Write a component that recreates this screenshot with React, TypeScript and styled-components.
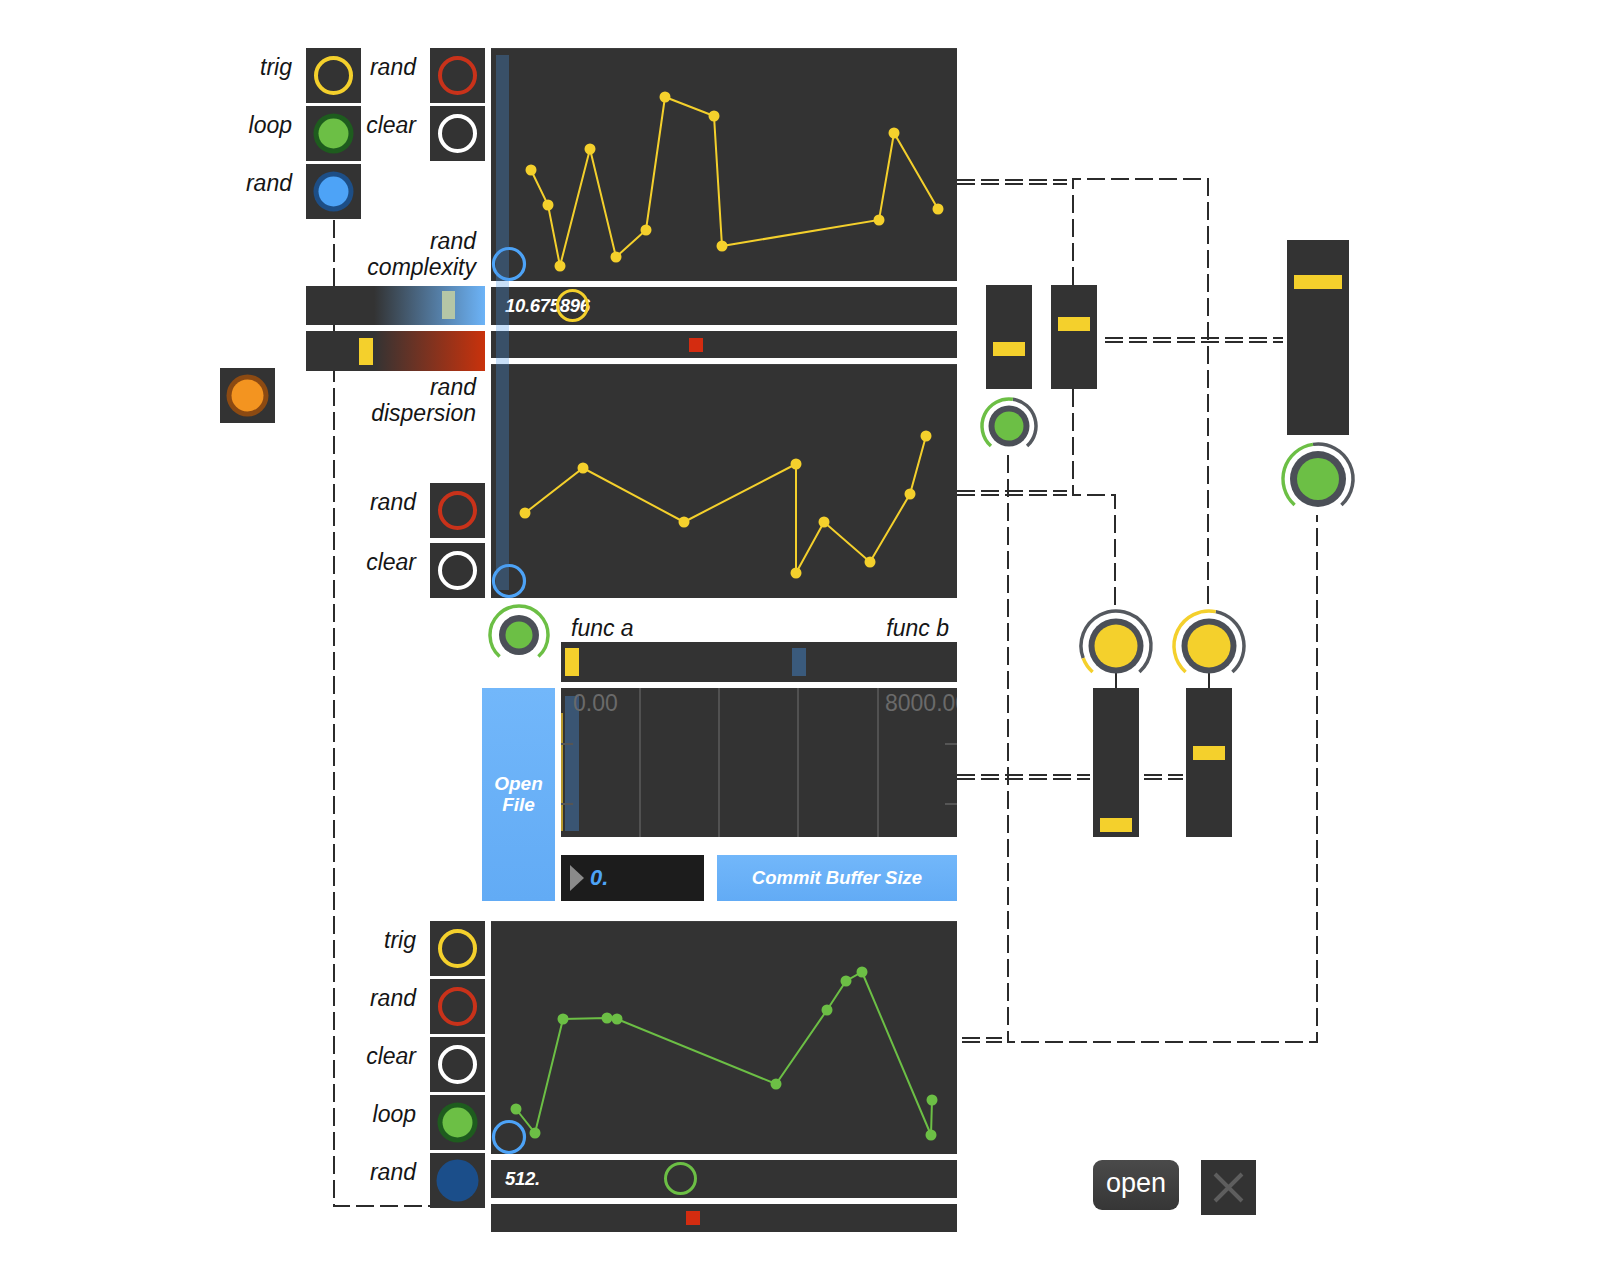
import React from 'react';
import styled, { createGlobalStyle, css } from 'styled-components';

const GlobalStyle = createGlobalStyle`
  html, body { margin: 0; padding: 0; background: #ffffff; }
  body { font-family: "Liberation Sans", Arial, sans-serif; }
`;

type Pos = { $x: number; $y: number };

/* patch objects sit on a free canvas: their place is the content */
const at = css<Pos>`
  position: absolute;
  left: ${(p) => p.$x}px;
  top: ${(p) => p.$y}px;
`;

const Canvas = styled.div`
  position: relative;
  width: 1600px;
  height: 1280px;
  overflow: hidden;
  background: #ffffff;
`;

const CordLayer = styled.svg`
  position: absolute;
  left: 0;
  top: 0;
  width: 1600px;
  height: 1280px;
  pointer-events: none;
`;

/* ---------- clusters (patch groups) ---------- */
const ClusterRow = styled.div<Pos & { $gap: number }>`
  ${at};
  display: flex;
  align-items: flex-start;
  gap: ${(p) => p.$gap}px;
`;

const ClusterColumn = styled.div<Pos & { $gap: number }>`
  ${at};
  display: flex;
  flex-direction: column;
  align-items: center;
  gap: ${(p) => p.$gap}px;
`;

const StrandColumn = styled.div<{ $gap: number }>`
  display: flex;
  flex-direction: column;
  align-items: center;
  gap: ${(p) => p.$gap}px;
`;

const EditorColumn = styled.div`
  display: flex;
  flex-direction: column;
  gap: 6px;
`;

/* ---------- toggles ---------- */
const ToggleStack = styled.div<{ $w: number; $gap: number }>`
  width: ${(p) => p.$w}px;
  flex: none;
  display: flex;
  flex-direction: column;
  gap: ${(p) => p.$gap}px;
`;

const PlacedStack = styled(ToggleStack)<Pos>`
  ${at};
`;

const ToggleRow = styled.div`
  display: flex;
  justify-content: flex-end;
  align-items: flex-start;
  gap: 14px;
`;

const Label = styled.span`
  font: italic 23px/28px "Liberation Sans", Arial, sans-serif;
  color: #151515;
  padding-top: 5px;
  white-space: nowrap;
`;

const ToggleBox = styled.div`
  width: 55px;
  height: 55px;
  flex: none;
  background: #333333;
  display: grid;
  place-items: center;
`;

const FloatingToggle = styled(ToggleBox)<Pos>`
  ${at};
`;

const Comment = styled.div<Pos & { $w: number }>`
  ${at};
  width: ${(p) => p.$w}px;
  text-align: right;
  font: italic 23px/26px "Liberation Sans", Arial, sans-serif;
  color: #151515;
`;

type ToggleKind =
  | { kind: 'ring'; color: string }
  | { kind: 'dot'; fill: string; ring: string }
  | { kind: 'solid'; fill: string };

const ToggleIcon: React.FC<{ t: ToggleKind }> = ({ t }) => (
  <svg width="55" height="55" viewBox="0 0 55 55">
    {t.kind === 'ring' && <circle cx="27.5" cy="27.5" r="17.5" fill="none" stroke={t.color} strokeWidth="4" />}
    {t.kind === 'dot' && (
      <>
        <circle cx="27.5" cy="27.5" r="20" fill={t.ring} />
        <circle cx="27.5" cy="27.5" r="15" fill={t.fill} />
      </>
    )}
    {t.kind === 'solid' && <circle cx="27.5" cy="27.5" r="21" fill={t.fill} />}
  </svg>
);

const YELLOW = '#f4d02c';
const RED = '#c9321a';
const WHITE = '#ffffff';
const GREEN = '#6cbf45';
const BLUE = '#4da3f7';

type Item = [string, ToggleKind];

const ToggleRows: React.FC<{ items: Item[] }> = ({ items }) => (
  <>
    {items.map(([label, t], i) => (
      <ToggleRow key={i}>
        <Label>{label}</Label>
        <ToggleBox>
          <ToggleIcon t={t} />
        </ToggleBox>
      </ToggleRow>
    ))}
  </>
);

/* ---------- function editors ---------- */
const FunctionPanel = styled.div<{ $h: number }>`
  width: 466px;
  height: ${(p) => p.$h}px;
  background: #333333;
  border-top: 1px solid #3e3e3e;
  box-sizing: border-box;
  flex: none;
`;

const FunctionGraph: React.FC<{ pts: number[][]; color: string; h: number }> = ({ pts, color, h }) => (
  <svg width="466" height={h} viewBox={`0 0 466 ${h}`} style={{ display: 'block' }}>
    <polyline points={pts.map((p) => p.join(',')).join(' ')} fill="none" stroke={color} strokeWidth="2" />
    {pts.map((p, i) => (
      <circle key={i} cx={p[0]} cy={p[1]} r="5.5" fill={color} />
    ))}
    <circle cx="18" cy={h - 18} r="15.5" fill="none" stroke={BLUE} strokeWidth="3.2" />
  </svg>
);

const ValueBar = styled.div`
  position: relative;
  width: 466px;
  height: 38px;
  flex: none;
  background: #333333;
  display: flex;
  align-items: center;
  padding-left: 14px;
  box-sizing: border-box;
  font: italic bold 18.5px "Liberation Sans", Arial, sans-serif;
  color: #ffffff;
  letter-spacing: -0.3px;
`;

const BarRing = styled.div<{ $left: number; $color: string }>`
  position: absolute;
  left: ${(p) => p.$left - 17}px;
  top: 2px;
  width: 27px;
  height: 27px;
  border: 3.5px solid ${(p) => p.$color};
  border-radius: 50%;
`;

const MarkerBar = styled.div<{ $h: number }>`
  position: relative;
  width: 466px;
  height: ${(p) => p.$h}px;
  flex: none;
  background: #333333;
`;

const RedMark = styled.div<{ $left: number }>`
  position: absolute;
  left: ${(p) => p.$left}px;
  top: 7px;
  width: 14px;
  height: 14px;
  background: #d42c10;
`;

const GradientSlider = styled.div<{ $h: number; $tone: string }>`
  position: relative;
  width: 179px;
  height: ${(p) => p.$h}px;
  background: linear-gradient(to right, #333333 38%, ${(p) => p.$tone} 100%);
`;

const GradThumb = styled.div<{ $left: number; $top: number; $color: string; $w: number; $h: number }>`
  position: absolute;
  left: ${(p) => p.$left}px;
  top: ${(p) => p.$top}px;
  width: ${(p) => p.$w}px;
  height: ${(p) => p.$h}px;
  background: ${(p) => p.$color};
`;

const Playhead = styled.div<Pos>`
  ${at};
  width: 13px;
  height: 535px;
  background: rgba(74, 150, 230, 0.3);
`;

/* ---------- buffer section (grid) ---------- */
const BufferSection = styled.div<Pos>`
  ${at};
  display: grid;
  grid-template-columns: 73px 396px;
  grid-template-rows: 36px 40px 6px 149px 18px 46px;
  column-gap: 6px;
`;

const DialCell = styled.div`
  grid-column: 1;
  grid-row: 1 / 3;
  display: flex;
  justify-content: center;
  align-items: flex-start;
  margin-top: -3px;
`;

const FuncLabels = styled.div`
  grid-column: 2;
  grid-row: 1;
  align-self: end;
  display: flex;
  justify-content: space-between;
  padding: 0 8px 0 10px;
  font: italic 23px/28px "Liberation Sans", Arial, sans-serif;
  color: #151515;
`;

const FuncSlider = styled.div`
  grid-column: 2;
  grid-row: 2;
  position: relative;
  background: #333333;
`;

const SliderKnob = styled.div<{ $left: number; $color: string }>`
  position: absolute;
  left: ${(p) => p.$left}px;
  top: 6px;
  width: 14px;
  height: 28px;
  background: ${(p) => p.$color};
`;

const OpenFile = styled.div`
  grid-column: 1;
  grid-row: 4 / 7;
  background: linear-gradient(#72b7fa, #62abf5);
  display: flex;
  align-items: center;
  justify-content: center;
  text-align: center;
  font: italic bold 19px/21px "Liberation Sans", Arial, sans-serif;
  color: #ffffff;
  padding-bottom: 2px;
`;

const Waveform = styled.div`
  grid-column: 2;
  grid-row: 4;
  position: relative;
  background: #333333;
  overflow: hidden;
`;

const GridLine = styled.div<{ $left: number }>`
  position: absolute;
  left: ${(p) => p.$left}px;
  top: 0;
  bottom: 0;
  width: 2px;
  background: #515151;
`;

const Tick = styled.div<{ $side: 'left' | 'right'; $top: number }>`
  position: absolute;
  ${(p) => p.$side}: 0;
  top: ${(p) => p.$top}px;
  width: 12px;
  height: 2px;
  background: #555555;
`;

const WaveText = styled.span<{ $left: number }>`
  position: absolute;
  left: ${(p) => p.$left}px;
  top: 2px;
  font: 23px/26px "Liberation Sans", Arial, sans-serif;
  color: #6a6a6a;
  white-space: nowrap;
`;

const Selection = styled.div`
  position: absolute;
  left: 4px;
  top: 8px;
  width: 14px;
  height: 135px;
  background: #3a5573;
`;

const CursorLine = styled.div`
  position: absolute;
  left: 0;
  top: 25px;
  width: 2px;
  height: 118px;
  background: #b89a2c;
`;

const BottomRow = styled.div`
  grid-column: 2;
  grid-row: 6;
  display: flex;
  gap: 13px;
`;

const NumberBox = styled.div`
  width: 143px;
  flex: none;
  background: #1c1c1c;
  display: flex;
  align-items: center;
  gap: 6px;
  padding-left: 9px;
  box-sizing: border-box;
  font: italic bold 22px "Liberation Sans", Arial, sans-serif;
  color: ${BLUE};
`;

const Arrow = styled.span`
  width: 0;
  height: 0;
  border-top: 13px solid transparent;
  border-bottom: 13px solid transparent;
  border-left: 14px solid #8a8a8a;
`;

const CommitButton = styled.div`
  flex: 1;
  background: linear-gradient(#72b7fa, #62abf5);
  display: flex;
  align-items: center;
  justify-content: center;
  font: italic bold 18.5px "Liberation Sans", Arial, sans-serif;
  color: #ffffff;
`;

/* ---------- right side ---------- */
const VSlider = styled.div<{ $w: number; $h: number }>`
  position: relative;
  flex: none;
  width: ${(p) => p.$w}px;
  height: ${(p) => p.$h}px;
  background: #333333;
`;

const PlacedSlider = styled(VSlider)<Pos>`
  ${at};
`;

const VThumb = styled.div<{ $top: number }>`
  position: absolute;
  left: 7px;
  right: 7px;
  top: ${(p) => p.$top}px;
  height: 14px;
  background: ${YELLOW};
`;

const DialSvg = styled.svg`
  display: block;
  flex: none;
  overflow: visible;
`;

const pt = (c: number, r: number, deg: number): [number, number] => {
  const a = (deg * Math.PI) / 180;
  return [c + r * Math.sin(a), c - r * Math.cos(a)];
};
const arcPath = (c: number, r: number, a0: number, a1: number) => {
  const [x0, y0] = pt(c, r, a0);
  const [x1, y1] = pt(c, r, a1);
  const large = a1 - a0 > 180 ? 1 : 0;
  return `M${x0.toFixed(2)} ${y0.toFixed(2)} A${r} ${r} 0 ${large} 1 ${x1.toFixed(2)} ${y1.toFixed(2)}`;
};

type DialProps = { arcR: number; ringR: number; fillR: number; color: string; value: number };
const Dial: React.FC<DialProps> = ({ arcR, ringR, fillR, color, value }) => {
  const c = arcR + 3;
  const s = c * 2;
  const split = -138 + 276 * value;
  return (
    <DialSvg width={s} height={s} viewBox={`0 0 ${s} ${s}`}>
      {value < 1 && <path d={arcPath(c, arcR, split, 138)} fill="none" stroke="#55595f" strokeWidth="3.5" />}
      {value > 0 && <path d={arcPath(c, arcR, -138, split)} fill="none" stroke={color} strokeWidth="3.5" />}
      <circle cx={c} cy={c} r={ringR} fill="#4b4f57" />
      <circle cx={c} cy={c} r={fillR} fill={color} />
    </DialSvg>
  );
};

const OpenButton = styled.div`
  width: 86px;
  height: 50px;
  border-radius: 9px;
  background: linear-gradient(#4a4a4a, #363636);
  color: #ffffff;
  display: flex;
  align-items: center;
  justify-content: center;
  font: 27px "Liberation Sans", Arial, sans-serif;
  padding-bottom: 3px;
  box-sizing: border-box;
`;

const CloseButton = styled.div`
  width: 55px;
  height: 55px;
  background: #333333;
  display: grid;
  place-items: center;
`;

/* ---------- cords ---------- */
const singleCords =
  'M334 220 V1206 H430 M1073 285 V179 H1208 V612 M1073 389 V495 H1115 V612 M1008 455 V1042 H1317 V515 M1116 672 V688 M1209 672 V688';
const doubleCords: [number, number, number][] = [
  [957, 1067, 182],
  [957, 1067, 493],
  [1105, 1283, 340],
  [957, 1090, 777],
  [1144, 1183, 777],
  [962, 1002, 1040],
];

const Cords: React.FC = () => (
  <CordLayer viewBox="0 0 1600 1280">
    <path d={singleCords} fill="none" stroke="#2b2b2b" strokeWidth="2" strokeDasharray="18 6" />
    {doubleCords.map(([x0, x1, y], i) => (
      <g key={i} stroke="#2b2b2b" strokeWidth="1.8" strokeDasharray="18 6">
        <line x1={x0} y1={y - 2} x2={x1} y2={y - 2} />
        <line x1={x0} y1={y + 2} x2={x1} y2={y + 2} />
      </g>
    ))}
  </CordLayer>
);

const P1 = [
  [40, 121], [57, 156], [69, 217], [99, 100], [125, 208], [155, 181], [174, 48], [223, 67], [231, 197], [388, 171], [403, 84], [447, 160],
];
const P2 = [[34, 148], [92, 103], [193, 157], [305, 99], [305, 208], [333, 157], [379, 197], [419, 129], [435, 71]];
const P3 = [
  [25, 187], [44, 211], [72, 97], [116, 96], [126, 97], [285, 162], [336, 88], [355, 59], [371, 50], [440, 213], [441, 178],
];

const YELLOW_DIALS = [
  { value: 0.1, thumb: 130 },
  { value: 0.54, thumb: 58 },
];

export default function App() {
  return (
    <>
      <GlobalStyle />
      <Canvas>
        <Cords />

        {/* top toggle block */}
        <ClusterRow $x={200} $y={48} $gap={0}>
          <ToggleStack $w={161} $gap={3}>
            <ToggleRows
              items={[
                ['trig', { kind: 'ring', color: YELLOW }],
                ['loop', { kind: 'dot', fill: GREEN, ring: '#1e5c1e' }],
                ['rand', { kind: 'dot', fill: BLUE, ring: '#1d4e86' }],
              ]}
            />
          </ToggleStack>
          <ToggleStack $w={124} $gap={3}>
            <ToggleRows
              items={[
                ['rand', { kind: 'ring', color: RED }],
                ['clear', { kind: 'ring', color: WHITE }],
              ]}
            />
          </ToggleStack>
        </ClusterRow>

        <Comment $x={316} $y={228} $w={160}>
          rand
          <br />
          complexity
        </Comment>

        <ClusterColumn $x={306} $y={286} $gap={6}>
          <GradientSlider $h={39} $tone="#6cb3f7">
            <GradThumb $left={136} $top={5} $w={13} $h={28} $color="#b5c6a6" />
          </GradientSlider>
          <GradientSlider $h={40} $tone="#c9320c">
            <GradThumb $left={53} $top={7} $w={14} $h={27} $color={YELLOW} />
          </GradientSlider>
        </ClusterColumn>

        {/* upper editors */}
        <ClusterColumn $x={491} $y={48} $gap={6}>
          <FunctionPanel $h={233}>
            <FunctionGraph pts={P1} color={YELLOW} h={233} />
          </FunctionPanel>
          <ValueBar>
            10.675896
            <BarRing $left={82} $color={YELLOW} />
          </ValueBar>
          <MarkerBar $h={27}>
            <RedMark $left={198} />
          </MarkerBar>
          <FunctionPanel $h={234}>
            <FunctionGraph pts={P2} color={YELLOW} h={234} />
          </FunctionPanel>
        </ClusterColumn>

        <FloatingToggle $x={220} $y={368}>
          <svg width="55" height="55" viewBox="0 0 55 55">
            <circle cx="27.5" cy="27.5" r="21" fill="#8c4a12" />
            <circle cx="27.5" cy="27.5" r="16" fill="#f39420" />
          </svg>
        </FloatingToggle>

        <Comment $x={316} $y={374} $w={160}>
          rand
          <br />
          dispersion
        </Comment>
        <PlacedStack $x={361} $y={483} $w={124} $gap={5}>
          <ToggleRows
            items={[
              ['rand', { kind: 'ring', color: RED }],
              ['clear', { kind: 'ring', color: WHITE }],
            ]}
          />
        </PlacedStack>

        <Playhead $x={496} $y={55} />

        <BufferSection $x={482} $y={606}>
          <DialCell>
            <Dial arcR={29} ringR={20} fillR={13.5} color={GREEN} value={1} />
          </DialCell>
          <FuncLabels>
            <span>func a</span>
            <span>func b</span>
          </FuncLabels>
          <FuncSlider>
            <SliderKnob $left={4} $color={YELLOW} />
            <SliderKnob $left={231} $color="#3a5a7c" />
          </FuncSlider>
          <OpenFile>
            Open
            <br />
            File
          </OpenFile>
          <Waveform>
            <Selection />
            <CursorLine />
            <GridLine $left={78} />
            <GridLine $left={157} />
            <GridLine $left={236} />
            <GridLine $left={316} />
            <Tick $side="left" $top={55} />
            <Tick $side="left" $top={115} />
            <Tick $side="right" $top={55} />
            <Tick $side="right" $top={115} />
            <WaveText $left={12}>0.00</WaveText>
            <WaveText $left={324}>8000.00</WaveText>
          </Waveform>
          <BottomRow>
            <NumberBox>
              <Arrow />
              0.
            </NumberBox>
            <CommitButton>Commit Buffer Size</CommitButton>
          </BottomRow>
        </BufferSection>

        {/* lower editor */}
        <ClusterRow $x={361} $y={921} $gap={6}>
          <ToggleStack $w={124} $gap={3}>
            <ToggleRows
              items={[
                ['trig', { kind: 'ring', color: YELLOW }],
                ['rand', { kind: 'ring', color: RED }],
                ['clear', { kind: 'ring', color: WHITE }],
                ['loop', { kind: 'dot', fill: GREEN, ring: '#1e5c1e' }],
                ['rand', { kind: 'solid', fill: '#1b4e8a' }],
              ]}
            />
          </ToggleStack>
          <EditorColumn>
            <FunctionPanel $h={233}>
              <FunctionGraph pts={P3} color={GREEN} h={233} />
            </FunctionPanel>
            <ValueBar>
              512.
              <BarRing $left={190} $color={GREEN} />
            </ValueBar>
            <MarkerBar $h={28}>
              <RedMark $left={195} />
            </MarkerBar>
          </EditorColumn>
        </ClusterRow>

        {/* right side controls */}
        <ClusterColumn $x={979} $y={285} $gap={7}>
          <VSlider $w={46} $h={104}>
            <VThumb $top={57} />
          </VSlider>
          <Dial arcR={27} ringR={20.5} fillR={14.5} color={GREEN} value={0.53} />
        </ClusterColumn>
        <PlacedSlider $x={1051} $y={285} $w={46} $h={104}>
          <VThumb $top={32} />
        </PlacedSlider>

        <ClusterColumn $x={1280} $y={240} $gap={6}>
          <VSlider $w={62} $h={195}>
            <VThumb $top={35} />
          </VSlider>
          <Dial arcR={35} ringR={28} fillR={21} color={GREEN} value={0.47} />
        </ClusterColumn>

        <ClusterRow $x={1078} $y={608} $gap={17}>
          {YELLOW_DIALS.map((d, i) => (
            <StrandColumn key={i} $gap={4}>
              <Dial arcR={35} ringR={27.5} fillR={21.5} color={YELLOW} value={d.value} />
              <VSlider $w={46} $h={149}>
                <VThumb $top={d.thumb} />
              </VSlider>
            </StrandColumn>
          ))}
        </ClusterRow>

        <ClusterRow $x={1093} $y={1160} $gap={22}>
          <OpenButton>open</OpenButton>
          <CloseButton>
            <svg width="55" height="55" viewBox="0 0 55 55">
              <path d="M14 14 L41 41 M41 14 L14 41" stroke="#5e5e5e" strokeWidth="4" />
            </svg>
          </CloseButton>
        </ClusterRow>
      </Canvas>
    </>
  );
}
